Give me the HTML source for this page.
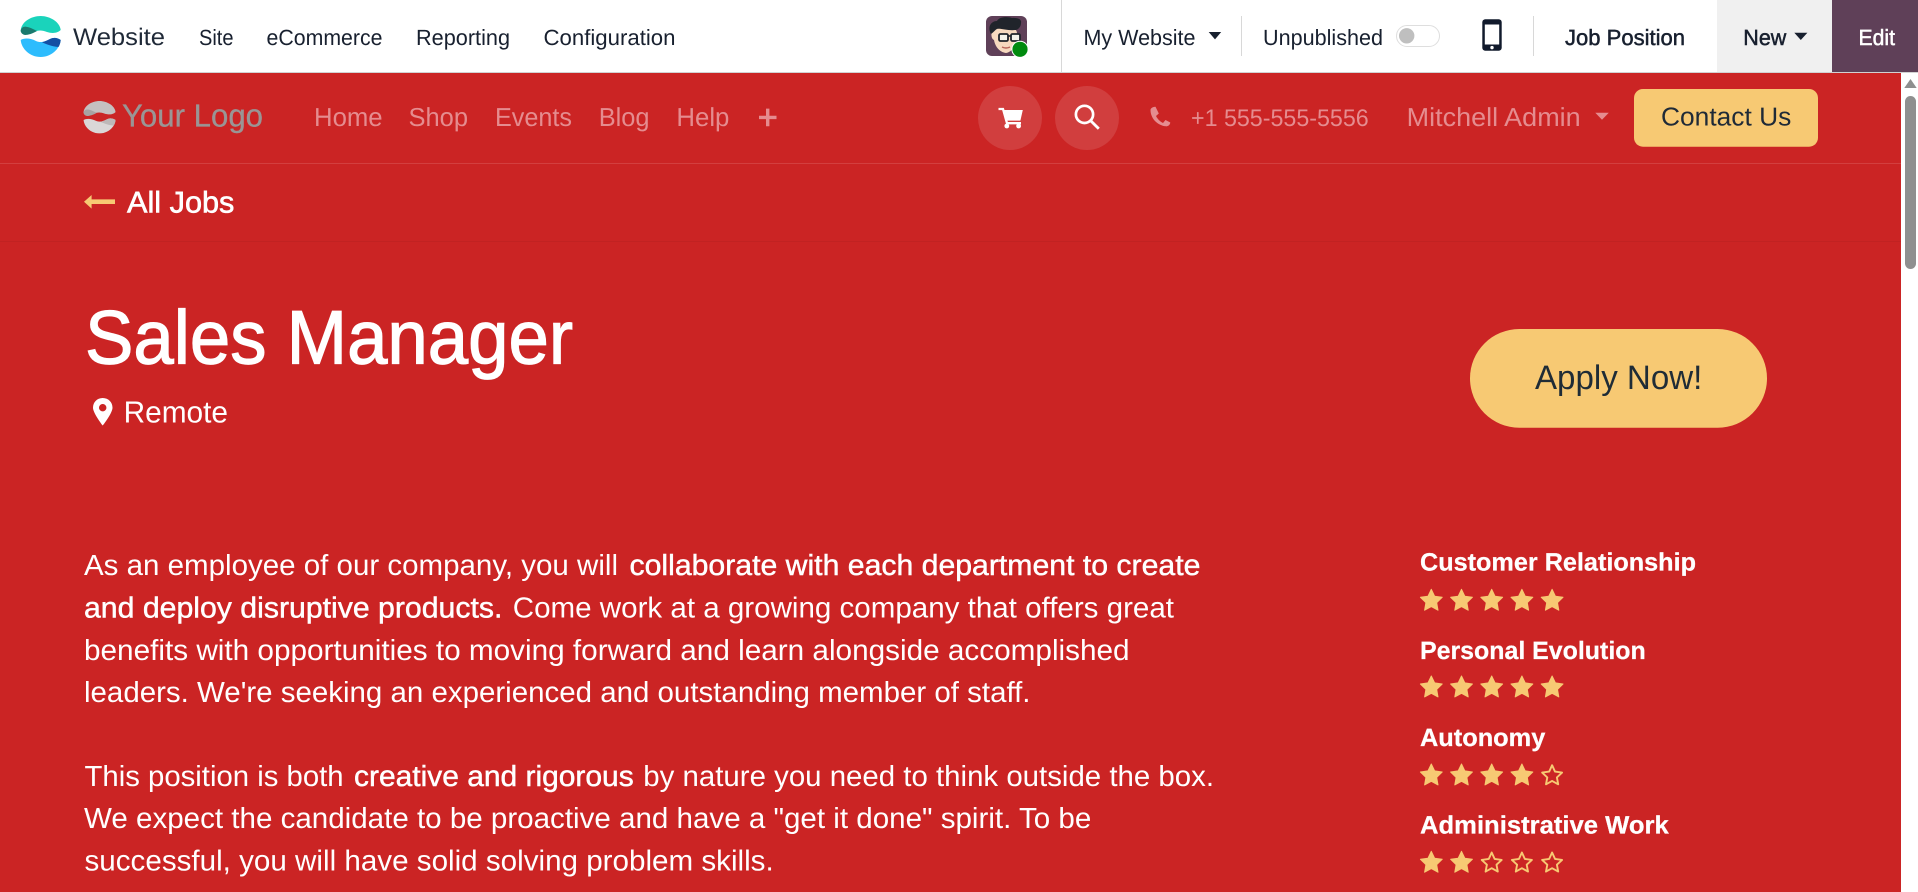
<!DOCTYPE html>
<html lang="en">
<head>
<meta charset="utf-8">
<title>Sales Manager</title>
<style>
html,body{margin:0;padding:0;width:1918px;height:892px;overflow:hidden;background:#cb2424}
svg{display:block}
text{font-family:"Liberation Sans",Arial,sans-serif;text-rendering:geometricPrecision;white-space:pre}
.top{font-size:22px;fill:#18202f}
.semi{stroke:#18202f;stroke-width:.5px}
.nav{font-size:26px;fill:#e58c8f}
.body{font-size:29px;fill:#fff}
.b{stroke:#fff;stroke-width:.45px}
.side{font-size:25px;font-weight:700;fill:#fff;stroke:#fff;stroke-width:.25px}
</style>
</head>
<body>
<svg xmlns="http://www.w3.org/2000/svg" width="1918" height="892" viewBox="0 0 1918 892">
  <!-- page background -->
  <rect width="1918" height="892" fill="#cb2424"/>

  <!-- top bar -->
  <rect width="1918" height="72" fill="#fff"/>
  <rect y="72" width="1918" height="1" fill="#d2d2d2"/>
  <rect x="1717" width="115" height="72" fill="#f0f0f0"/>
  <rect x="1832" width="86" height="72" fill="#5f4058"/>

  <!-- app logo -->
  <path fill="#1ad3bb" d="M20.7 31C21 22 31 16 40.7 16C50 16 60 22 60.7 30C57 33.5 52 33.5 47 32C42 30 38 30 34 32C30 34 24 35 20.7 31Z"/>
  <path fill="#1a7a6e" d="M20.7 31C21 28 23 26.5 26 26.7C30 27 34 29.5 37 31C33 33.5 28 35 25 35C22.5 34.5 21 33 20.7 31Z"/>
  <path fill="#2dbcfd" d="M20.7 40C25 37.5 31 38.5 36 41C41 43.5 46 41 50 39C54 37 58 38 60.7 40C60 49 51 57 40.7 57C30 57 21.5 49 20.7 40Z"/>
  <path fill="#144fa3" d="M42 42.3C45 41.5 47 40.5 50 39C54 37 58 38 60.7 40C60.5 42.5 59.8 44.8 58.5 47C52 46.5 47 44.5 42 42.3Z"/>

  <text x="73" y="45" font-size="24" fill="#1f2937" textLength="92" lengthAdjust="spacingAndGlyphs">Website</text>
  <text class="top" x="199" y="45" textLength="34.5" lengthAdjust="spacingAndGlyphs">Site</text>
  <text class="top" x="266.5" y="45" textLength="116" lengthAdjust="spacingAndGlyphs">eCommerce</text>
  <text class="top" x="416" y="45" textLength="94" lengthAdjust="spacingAndGlyphs">Reporting</text>
  <text class="top" x="543.5" y="45" textLength="132" lengthAdjust="spacingAndGlyphs">Configuration</text>

  <!-- avatar -->
  <rect x="986" y="16" width="41" height="40" rx="6" fill="#5f4058"/>
  <path fill="#f7d9bf" d="M992 31C992 27 997 26 1004 26C1012 26 1017 28 1017 34C1017 43 1013 52 1006 53C999 52 995 46 994 40C991 39 991 33 992 31Z"/>
  <path fill="#20242b" d="M991 34C987 27 991 21 997 21C999 16.5 1008 16.5 1012 18C1017 17.5 1022 19 1021 23C1021 27 1018 30 1015 30C1009 31 1000 28 997 29C995 30 994 32 991 34Z"/>
  <g fill="#f5f2ea" stroke="#20242b" stroke-width="1.8">
    <rect x="999" y="34" width="9" height="7" rx="1.5"/>
    <rect x="1011" y="34" width="9" height="7" rx="1.5"/>
  </g>
  <path d="M1008 36h3" stroke="#20242b" stroke-width="1.6"/>
  <path d="M1002 47q4 2 8 0" stroke="#b8655a" stroke-width="1.4" fill="none"/>
  <circle cx="1020" cy="49.3" r="8.6" fill="#fff"/>
  <circle cx="1020" cy="49.3" r="7.6" fill="#008a0e"/>

  <rect x="1061" y="0" width="1" height="72" fill="#d8d8d8"/>
  <text class="top" x="1083.5" y="45" textLength="112" lengthAdjust="spacingAndGlyphs">My Website</text>
  <polygon points="1208.7,32 1221.2,32 1215,39.4" fill="#18202f"/>
  <rect x="1241" y="16" width="1" height="40" fill="#d8d8d8"/>
  <text class="top" x="1263" y="45" textLength="120" lengthAdjust="spacingAndGlyphs">Unpublished</text>
  <rect x="1396.5" y="25.5" width="43" height="21" rx="10.5" fill="#fff" stroke="#dedede"/>
  <circle cx="1406.7" cy="35.8" r="7.7" fill="#bfbfbf"/>

  <!-- device icon -->
  <rect x="1482.3" y="19.3" width="19.4" height="31.4" rx="3" fill="#111a2c"/>
  <rect x="1484.8" y="24.5" width="14.4" height="20" fill="#fff"/>
  <circle cx="1492" cy="47.6" r="1.7" fill="#fff"/>
  <rect x="1533" y="16" width="1" height="40" fill="#d8d8d8"/>

  <text class="top semi" x="1565" y="45" textLength="120" lengthAdjust="spacingAndGlyphs">Job Position</text>
  <text class="top semi" x="1743.3" y="45" textLength="43" lengthAdjust="spacingAndGlyphs">New</text>
  <polygon points="1794.3,32.8 1807.4,32.8 1800.8,40" fill="#18202f"/>
  <text class="top" x="1858.5" y="45" style="fill:#fff;stroke:#fff;stroke-width:.5px" textLength="36.5" lengthAdjust="spacingAndGlyphs">Edit</text>

  <!-- website header -->
  <rect y="163" width="1901" height="1" fill="#d33f3f"/>
  <rect y="241" width="1901" height="1" fill="#c12222"/>

  <g transform="translate(67,88.4) scale(.8,.79)">
    <path fill="#c5c0c0" d="M20.7 31C21 22 31 16 40.7 16C50 16 60 22 60.7 30C57 33.5 52 33.5 47 32C42 30 38 30 34 32C30 34 24 35 20.7 31Z"/>
    <path fill="#a8a3a3" d="M20.7 31C21 28 23 26.5 26 26.7C30 27 34 29.5 37 31C33 33.5 28 35 25 35C22.5 34.5 21 33 20.7 31Z"/>
    <path fill="#dad7d7" d="M20.7 40C25 37.5 31 38.5 36 41C41 43.5 46 41 50 39C54 37 58 38 60.7 40C60 49 51 57 40.7 57C30 57 21.5 49 20.7 40Z"/>
    <path fill="#bdb8b8" d="M42 42.3C45 41.5 47 40.5 50 39C54 37 58 38 60.7 40C60.5 42.5 59.8 44.8 58.5 47C52 46.5 47 44.5 42 42.3Z"/>
  </g>
  <text x="122" y="126.7" font-size="32" fill="#9a9595" stroke="#9a9595" stroke-width=".3" textLength="141" lengthAdjust="spacingAndGlyphs">Your Logo</text>

  <text class="nav" x="314" y="126" textLength="68.6" lengthAdjust="spacingAndGlyphs">Home</text>
  <text class="nav" x="408.5" y="126" textLength="59.5" lengthAdjust="spacingAndGlyphs">Shop</text>
  <text class="nav" x="495" y="126" textLength="77" lengthAdjust="spacingAndGlyphs">Events</text>
  <text class="nav" x="598.7" y="126" textLength="50.8" lengthAdjust="spacingAndGlyphs">Blog</text>
  <text class="nav" x="676.4" y="126" textLength="53" lengthAdjust="spacingAndGlyphs">Help</text>
  <path d="M759 117.4H776.5M767.7 108.6V126.2" stroke="#e58c8f" stroke-width="3.4" fill="none"/>

  <!-- cart button -->
  <circle cx="1010" cy="118" r="32" fill="#d13e3e"/>
  <path d="M998.5 109H1003L1007 123.2H1021" stroke="#fff" stroke-width="2.3" fill="none"/>
  <polygon points="1004,110 1022.8,110 1020.4,120.6 1006.6,120.6" fill="#fff"/>
  <circle cx="1006.8" cy="126" r="2.4" fill="#fff"/>
  <circle cx="1018.6" cy="126" r="2.4" fill="#fff"/>

  <!-- search button -->
  <circle cx="1087" cy="118" r="32" fill="#d13e3e"/>
  <circle cx="1084.5" cy="114.4" r="8.6" stroke="#fff" stroke-width="2.7" fill="none"/>
  <path d="M1090.6 120.6L1098.8 128.8" stroke="#fff" stroke-width="2.8"/>

  <!-- phone -->
  <path fill="#e58c8f" d="M1150.5 110C1150.5 108.5 1152 107 1155.5 106.7L1158.8 113.5L1156 116C1157.5 119 1160 121.5 1163 123L1165.5 120L1170.3 122.5C1170 125 1168 126.5 1166 126.3C1157 125.5 1150.5 118 1150.5 110Z"/>
  <text x="1191" y="126" font-size="24" fill="#e58c8f" textLength="177.7" lengthAdjust="spacingAndGlyphs">+1 555-555-5556</text>
  <text class="nav" x="1406.7" y="126" textLength="174" lengthAdjust="spacingAndGlyphs">Mitchell Admin</text>
  <polygon points="1595.3,112.8 1608.8,112.8 1602,119.8" fill="#e58c8f"/>

  <!-- contact -->
  <rect x="1634" y="89" width="184" height="57.7" rx="9" fill="#f7c973"/>
  <text x="1661" y="125.7" font-size="26" fill="#1f2a37" textLength="130.3" lengthAdjust="spacingAndGlyphs">Contact Us</text>

  <!-- all jobs -->
  <polygon points="84,201.7 91.6,195 91.6,199.4 115,199.4 115,204 91.6,204 91.6,208.6" fill="#f7c973"/>
  <text x="127" y="212.7" font-size="30" fill="#fff" stroke="#fff" stroke-width=".6" textLength="107.4" lengthAdjust="spacingAndGlyphs">All Jobs</text>

  <!-- title -->
  <text x="85" y="363.3" font-size="76" fill="#fff" stroke="#fff" stroke-width="1.2" textLength="488" lengthAdjust="spacingAndGlyphs">Sales Manager</text>
  <path fill="#fff" fill-rule="evenodd" d="M102.7 398C108.5 398 112.5 402.3 112.5 407.7C112.5 412 106 421.5 102.7 425.5C99.5 421.5 93 412 93 407.7C93 402.3 97 398 102.7 398ZM102.7 404a3.7 3.7 0 1 0 .01 0Z"/>
  <text x="123.6" y="422.7" font-size="30.5" fill="#fff" textLength="104.4" lengthAdjust="spacingAndGlyphs">Remote</text>

  <!-- apply -->
  <rect x="1470" y="329" width="297" height="98.7" rx="49.3" fill="#f7c973"/>
  <text x="1535" y="389" font-size="34" fill="#1f2c36" textLength="167.3" lengthAdjust="spacingAndGlyphs">Apply Now!</text>

  <!-- description -->
  <text class="body" x="84" y="575" textLength="534" lengthAdjust="spacingAndGlyphs">As an employee of our company, you will</text>
  <text class="body b" x="629.5" y="575" textLength="570.9" lengthAdjust="spacingAndGlyphs">collaborate with each department to create</text>
  <text class="body b" x="84" y="617.3" textLength="418.4" lengthAdjust="spacingAndGlyphs">and deploy disruptive products.</text>
  <text class="body" x="512.8" y="617.3" textLength="661.2" lengthAdjust="spacingAndGlyphs">Come work at a growing company that offers great</text>
  <text class="body" x="84" y="660" textLength="1045.6" lengthAdjust="spacingAndGlyphs">benefits with opportunities to moving forward and learn alongside accomplished</text>
  <text class="body" x="84" y="702" textLength="946.5" lengthAdjust="spacingAndGlyphs">leaders. We're seeking an experienced and outstanding member of staff.</text>

  <text class="body" x="84.5" y="786" textLength="259.1" lengthAdjust="spacingAndGlyphs">This position is both</text>
  <text class="body b" x="354" y="786" textLength="279.7" lengthAdjust="spacingAndGlyphs">creative and rigorous</text>
  <text class="body" x="643.3" y="786" textLength="570.7" lengthAdjust="spacingAndGlyphs">by nature you need to think outside the box.</text>
  <text class="body" x="84" y="828" textLength="1007.3" lengthAdjust="spacingAndGlyphs">We expect the candidate to be proactive and have a "get it done" spirit. To be</text>
  <text class="body" x="84.5" y="870.3" textLength="689.2" lengthAdjust="spacingAndGlyphs">successful, you will have solid solving problem skills.</text>

  <!-- skills -->
  <defs>
    <path id="f" fill="#f7c973" stroke="#f7c973" stroke-width="1" stroke-linejoin="round" d="M12 1L15.3 7.9L22.9 9L17.4 14.4L18.7 21.9L12 18.3L5.3 21.9L6.6 14.4L1.1 9L8.7 7.9Z"/>
    <path id="e" fill="none" stroke="#f7c973" stroke-width="1.9" stroke-linejoin="round" d="M12 2.2L14.9 8.6L22 9.6L16.8 14.4L18.1 21.3L12 17.9L5.9 21.3L7.2 14.4L2 9.6L9.1 8.6Z"/>
  </defs>

  <text class="side" x="1420" y="570.7" textLength="276" lengthAdjust="spacingAndGlyphs">Customer Relationship</text>
  <g transform="translate(1419.3,588.3)"><use href="#f"/><use href="#f" x="30.2"/><use href="#f" x="60.4"/><use href="#f" x="90.6"/><use href="#f" x="120.8"/></g>

  <text class="side" x="1420" y="659" textLength="225.7" lengthAdjust="spacingAndGlyphs">Personal Evolution</text>
  <g transform="translate(1419.3,675)"><use href="#f"/><use href="#f" x="30.2"/><use href="#f" x="60.4"/><use href="#f" x="90.6"/><use href="#f" x="120.8"/></g>

  <text class="side" x="1420" y="746" textLength="125.3" lengthAdjust="spacingAndGlyphs">Autonomy</text>
  <g transform="translate(1419.3,763)"><use href="#f"/><use href="#f" x="30.2"/><use href="#f" x="60.4"/><use href="#f" x="90.6"/><use href="#e" x="120.8"/></g>

  <text class="side" x="1420" y="833.3" textLength="248.7" lengthAdjust="spacingAndGlyphs">Administrative Work</text>
  <g transform="translate(1419.3,850.3)"><use href="#f"/><use href="#f" x="30.2"/><use href="#e" x="60.4"/><use href="#e" x="90.6"/><use href="#e" x="120.8"/></g>

  <!-- scrollbar -->
  <rect x="1901" y="73" width="17" height="819" fill="#fff"/>
  <polygon points="1910.5,79 1916.7,88 1904.3,88" fill="#8f8f8f"/>
  <rect x="1905" y="96" width="11" height="173" rx="5.5" fill="#8f8f8f"/>
</svg>
</body>
</html>
